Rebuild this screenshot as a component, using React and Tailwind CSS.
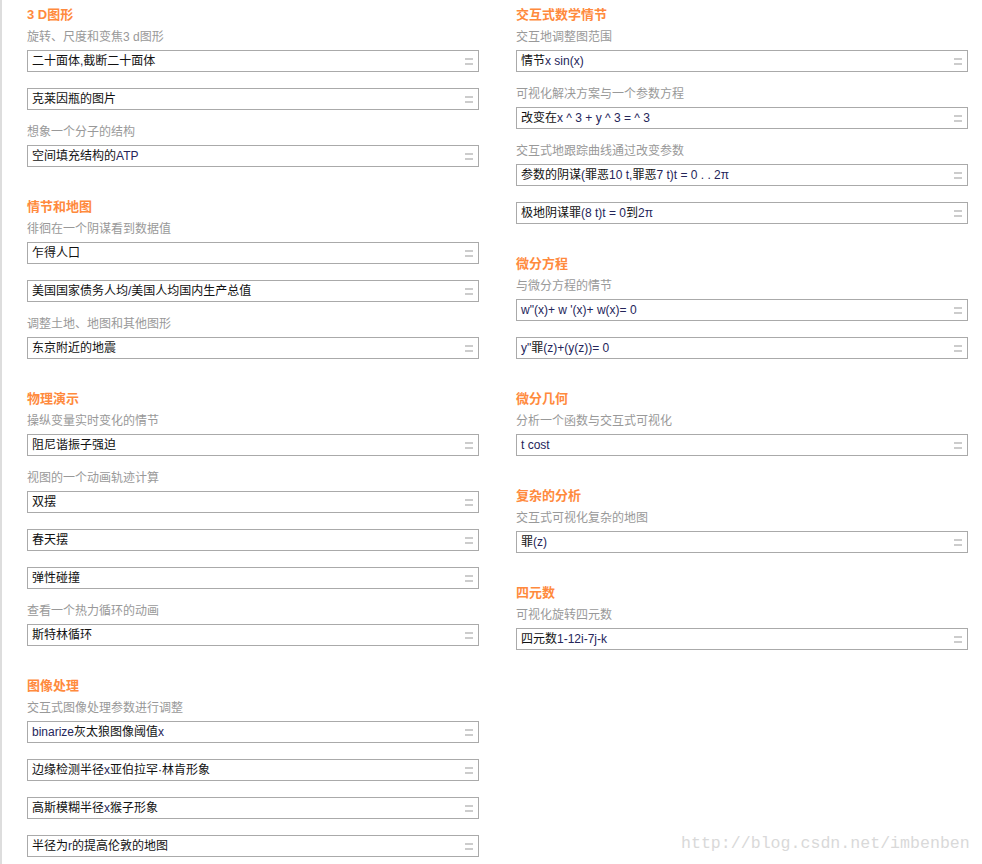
import React from "react";

const left = [
  {
    title: "3 D图形",
    items: [
      { sub: "旋转、尺度和变焦3 d图形", text: "二十面体,截断二十面体" },
      { text: "克莱因瓶的图片" },
      { sub: "想象一个分子的结构", text: "空间填充结构的ATP" },
    ],
  },
  {
    title: "情节和地图",
    items: [
      { sub: "徘徊在一个阴谋看到数据值", text: "乍得人口" },
      { text: "美国国家债务人均/美国人均国内生产总值" },
      { sub: "调整土地、地图和其他图形", text: "东京附近的地震" },
    ],
  },
  {
    title: "物理演示",
    items: [
      { sub: "操纵变量实时变化的情节", text: "阻尼谐振子强迫" },
      { sub: "视图的一个动画轨迹计算", text: "双摆" },
      { text: "春天摆" },
      { text: "弹性碰撞" },
      { sub: "查看一个热力循环的动画", text: "斯特林循环" },
    ],
  },
  {
    title: "图像处理",
    items: [
      { sub: "交互式图像处理参数进行调整", text: "binarize灰太狼图像阈值x" },
      { text: "边缘检测半径x亚伯拉罕·林肯形象" },
      { text: "高斯模糊半径x猴子形象" },
      { text: "半径为r的提高伦敦的地图" },
    ],
  },
];

const right = [
  {
    title: "交互式数学情节",
    items: [
      { sub: "交互地调整图范围", text: "情节x sin(x)" },
      { sub: "可视化解决方案与一个参数方程", text: "改变在x ^ 3 + y ^ 3 = ^ 3" },
      { sub: "交互式地跟踪曲线通过改变参数", text: "参数的阴谋(罪恶10 t,罪恶7 t)t = 0 . . 2π" },
      { text: "极地阴谋罪(8 t)t = 0到2π" },
    ],
  },
  {
    title: "微分方程",
    items: [
      { sub: "与微分方程的情节", text: "w\"(x)+ w '(x)+ w(x)= 0" },
      { text: "y\"罪(z)+(y(z))= 0" },
    ],
  },
  {
    title: "微分几何",
    items: [{ sub: "分析一个函数与交互式可视化", text: "t cost" }],
  },
  {
    title: "复杂的分析",
    items: [{ sub: "交互式可视化复杂的地图", text: "罪(z)" }],
  },
  {
    title: "四元数",
    items: [{ sub: "可视化旋转四元数", text: "四元数1-12i-7j-k" }],
  },
];

function Mixed({ text }) {
  const parts = text.split(/([\u3000-\u9fff\uff00-\uffef·]+)/).filter((p) => p.length);
  return (
    <>
      {parts.map((p, i) =>
        /[\u3000-\u9fff\uff00-\uffef·]/.test(p) ? (
          <span key={i} className="text-[#111]">
            {p}
          </span>
        ) : (
          <span key={i} className="text-[#25255a]">
            {p}
          </span>
        )
      )}
    </>
  );
}

function Box({ text }) {
  return (
    <div className="h-[22px] border border-[#aaaaaa] flex items-center justify-between pl-1 pr-[5px] bg-white">
      <span className="text-[12px] leading-5 whitespace-pre">
        <Mixed text={text} />
      </span>
      <svg width="8" height="7" viewBox="0 0 8 7" className="shrink-0">
        <rect x="0" y="0" width="8" height="2" fill="#cccccc" />
        <rect x="0" y="5" width="8" height="2" fill="#cccccc" />
      </svg>
    </div>
  );
}

function Section({ s, first }) {
  return (
    <div className={first ? "" : "mt-[30px]"}>
      <div className="h-5 leading-5 text-[13px] font-bold text-[#ff8a3d]">{s.title}</div>
      {s.items.map((it, i) => (
        <div key={i} className={it.sub ? (i === 0 ? "mt-[2px]" : "mt-3") : "mt-4"}>
          {it.sub && (
            <div className="h-5 leading-5 text-[12px] text-[#999999] mb-[3px] whitespace-pre">{it.sub}</div>
          )}
          <Box text={it.text} />
        </div>
      ))}
    </div>
  );
}

export default function App() {
  return (
    <div className="relative w-[982px] min-h-[864px] bg-white border-l-2 border-[#dddddd] font-['Liberation_Sans','Noto_Sans_CJK_SC',sans-serif] overflow-hidden">
      <div className="grid grid-cols-[452px_452px] gap-x-[37px] pl-[25px] pt-[5px] items-start">
        <div>
          {left.map((s, i) => (
            <Section key={i} s={s} first={i === 0} />
          ))}
        </div>
        <div>
          {right.map((s, i) => (
            <Section key={i} s={s} first={i === 0} />
          ))}
        </div>
      </div>
      <div className="absolute left-[679px] top-[833px] text-[16.6px] leading-[22px] text-[#d9d9d9] font-['Liberation_Mono',monospace] whitespace-pre">
        http://blog.csdn.net/imbenben
      </div>
    </div>
  );
}
